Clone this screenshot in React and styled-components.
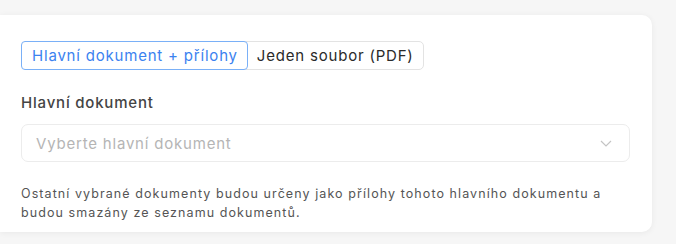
import React, { useState } from "react";
import styled, { createGlobalStyle } from "styled-components";

const GlobalStyle = createGlobalStyle`
  html, body {
    margin: 0;
    padding: 0;
    background: #f6f6f6;
    font-family: Inter, "Noto Sans", "Liberation Sans", sans-serif;
  }
`;

const Page = styled.div`
  padding: 15px 24px 10px 0;
`;

const Card = styled.div`
  background: #ffffff;
  border-radius: 0 10px 10px 0;
  box-shadow: 0 1px 6px rgba(0, 0, 0, 0.06);
  padding: 26px 22px 10px 21px;
`;

const Segmented = styled.div`
  display: inline-flex;
  border: 1px solid #e3e3e3;
  border-radius: 5px;
`;

const Segment = styled.button`
  font: inherit;
  font-size: 15px;
  letter-spacing: 0.8px;
  height: 29px;
  padding: 0 9px 0 10px;
  background: ${(p) => (p.$active ? "#fff" : "transparent")};
  border: 1px solid ${(p) => (p.$active ? "#7ab0f7" : "transparent")};
  border-radius: 4px;
  margin: -1px;
  color: ${(p) => (p.$active ? "#3b82f0" : "#2a2a2a")};
  cursor: pointer;
`;

const Label = styled.div`
  margin-top: 23px;
  font-size: 15px;
  letter-spacing: 0.8px;
  font-weight: 500;
  color: #444;
`;

const Select = styled.div`
  margin-top: 12px;
  height: 36px;
  border: 1px solid #ececec;
  border-radius: 7px;
  display: flex;
  align-items: center;
  justify-content: space-between;
  padding: 0 17px 0 14px;
  font-size: 15px;
  letter-spacing: 0.8px;
  color: #b5b5b5;
`;

const Hint = styled.p`
  margin: 22px 0 0;
  font-size: 12.5px;
  letter-spacing: 1.08px;
  line-height: 19px;
  color: #555;
`;

function Chevron() {
  return (
    <svg width="12" height="7" viewBox="0 0 12 7" fill="none">
      <path d="M1 1L6 6L11 1" stroke="#c4c4c4" strokeWidth="1.2" />
    </svg>
  );
}

export default function App() {
  const [mode, setMode] = useState("main");
  return (
    <>
      <GlobalStyle />
      <Page>
        <Card>
          <Segmented>
            <Segment $active={mode === "main"} onClick={() => setMode("main")}>
              Hlavní dokument + přílohy
            </Segment>
            <Segment $active={mode === "pdf"} onClick={() => setMode("pdf")}>
              Jeden soubor (PDF)
            </Segment>
          </Segmented>
          <Label>Hlavní dokument</Label>
          <Select>
            <span>Vyberte hlavní dokument</span>
            <Chevron />
          </Select>
          <Hint>
            Ostatní vybrané dokumenty budou určeny jako přílohy tohoto hlavního dokumentu a
            <br />
            budou smazány ze seznamu dokumentů.
          </Hint>
        </Card>
      </Page>
    </>
  );
}
